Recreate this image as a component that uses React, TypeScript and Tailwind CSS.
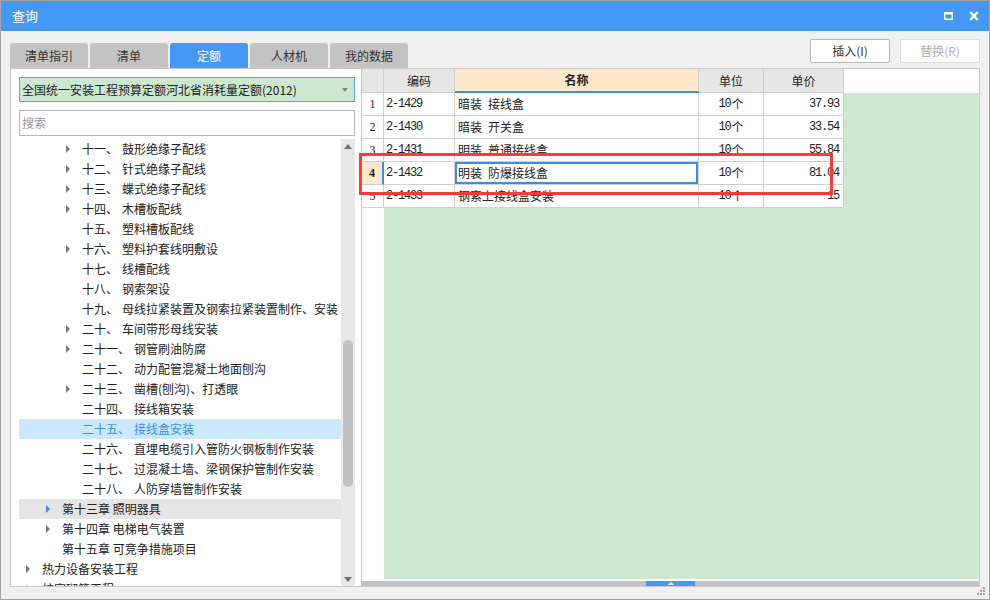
import React from "react";

type TreeNode = {
  level: number;
  arrow?: boolean;
  prefix?: string;
  label: string;
  selected?: boolean;
  hover?: boolean;
};

const TREE: TreeNode[] = [
  { level: 3, arrow: true, prefix: "十一、", label: "鼓形绝缘子配线" },
  { level: 3, arrow: true, prefix: "十二、", label: "针式绝缘子配线" },
  { level: 3, arrow: true, prefix: "十三、", label: "蝶式绝缘子配线" },
  { level: 3, arrow: true, prefix: "十四、", label: "木槽板配线" },
  { level: 3, prefix: "十五、", label: "塑料槽板配线" },
  { level: 3, arrow: true, prefix: "十六、", label: "塑料护套线明敷设" },
  { level: 3, prefix: "十七、", label: "线槽配线" },
  { level: 3, prefix: "十八、", label: "钢索架设" },
  { level: 3, prefix: "十九、", label: "母线拉紧装置及钢索拉紧装置制作、安装" },
  { level: 3, arrow: true, prefix: "二十、", label: "车间带形母线安装" },
  { level: 3, arrow: true, prefix: "二十一、", label: "钢管刷油防腐" },
  { level: 3, prefix: "二十二、", label: "动力配管混凝土地面刨沟" },
  { level: 3, arrow: true, prefix: "二十三、", label: "凿槽(刨沟)、打透眼" },
  { level: 3, prefix: "二十四、", label: "接线箱安装" },
  { level: 3, prefix: "二十五、", label: "接线盒安装", selected: true },
  { level: 3, prefix: "二十六、", label: "直埋电缆引入管防火钢板制作安装" },
  { level: 3, prefix: "二十七、", label: "过混凝土墙、梁钢保护管制作安装" },
  { level: 3, prefix: "二十八、", label: "人防穿墙管制作安装" },
  { level: 2, arrow: true, label: "第十三章 照明器具", hover: true },
  { level: 2, arrow: true, label: "第十四章 电梯电气装置" },
  { level: 2, label: "第十五章 可竞争措施项目" },
  { level: 1, arrow: true, label: "热力设备安装工程" },
  { level: 1, arrow: true, label: "炉窑砌筑工程" },
];

const ROWS = [
  ["1", "2-1429", "暗装 接线盒", "37.93"],
  ["2", "2-1430", "暗装 开关盒", "33.54"],
  ["3", "2-1431", "明装 普通接线盒", "55.84"],
  ["4", "2-1432", "明装 防爆接线盒", "81.04"],
  ["5", "2-1433", "钢索上接线盒安装", "15"],
];

const TABS = ["清单指引", "清单", "定额", "人材机", "我的数据"];

const MONO = "font-['Liberation_Mono','Noto_Sans_CJK_SC',monospace] tracking-[-1.2px]";

function TreeRow({ node }: { node: TreeNode }) {
  const indent = node.level === 3 ? "pl-[40px]" : node.level === 2 ? "pl-[20px]" : "pl-0";
  const bg = node.selected ? "bg-[#cce8ff] text-[#3a8ee6]" : node.hover ? "bg-[#e5e5e5]" : "";
  const arrowColor = node.hover ? "border-l-[#3a8ee6]" : "border-l-[#777]";
  return (
    <div className={`flex h-[20px] shrink-0 items-center whitespace-nowrap ${indent} ${bg}`}>
      <span className="flex w-[23px] shrink-0 items-center pl-[7px]">
        {node.arrow ? (
          <span className={`h-0 w-0 border-y-[4px] border-l-[4px] border-y-transparent ${arrowColor}`} />
        ) : null}
      </span>
      {node.prefix ? <span>{node.prefix}</span> : null}
      <span className={node.prefix ? "ml-1" : ""}>{node.label}</span>
    </div>
  );
}

export default function App() {
  return (
    <div className="relative flex h-[600px] w-[990px] flex-col overflow-hidden border border-[#a4a4a4] bg-[#f0f0f0] font-['Noto_Sans_CJK_SC','Noto_Sans',sans-serif] text-[12px] text-[#222]">
      {/* title bar */}
      <div className="flex h-[30px] shrink-0 items-center justify-between bg-[#4598f6] pl-[11px] pr-[10px] text-white">
        <span className="text-[13px]">查询</span>
        <div className="flex items-center gap-[16px]">
          <svg width="9" height="8" viewBox="0 0 9 8">
            <rect x="0.75" y="1.25" width="7.5" height="6" fill="none" stroke="#fff" strokeWidth="1.5" />
            <rect x="0" y="0" width="9" height="2.5" fill="#fff" />
          </svg>
          <svg width="10" height="10" viewBox="0 0 10 10">
            <path d="M1.2 1.2 L8.8 8.8 M8.8 1.2 L1.2 8.8" stroke="#fff" strokeWidth="2.4" />
          </svg>
        </div>
      </div>

      {/* tabs + buttons */}
      <div className="flex h-[37px] shrink-0 items-end justify-between px-[9px]">
        <div className="flex gap-[2px]">
          {TABS.map((t) => (
            <div
              key={t}
              className={`flex h-[25px] w-[78px] items-center justify-center rounded-t-[3px] ${
                t === "定额" ? "bg-[#4598f6] text-white" : "bg-[#c3c3c3] text-[#333]"
              }`}
            >
              {t}
            </div>
          ))}
        </div>
        <div className="mb-[5px] flex gap-[10px]">
          <button className="h-[24px] w-[80px] rounded-[2px] border border-[#b8b8b8] bg-white text-[#333]">插入(I)</button>
          <button className="h-[24px] w-[80px] rounded-[2px] border border-[#dcdcdc] bg-white text-[#b0b0b0]">替换(R)</button>
        </div>
      </div>

      {/* main */}
      <div className="mx-[9px] flex h-[519px] shrink-0 border border-[#c9c9c9] bg-white">
        {/* left panel */}
        <div className="flex w-[350px] shrink-0 flex-col pl-[8px] pr-[6px] pt-[8px]">
          <div className="flex h-[25px] shrink-0 items-center justify-between border border-[#5aa3f0] bg-[#cde8d1] pl-[2px] pr-[6px]">
            <span>全国统一安装工程预算定额河北省消耗量定额(2012)</span>
            <span className="h-0 w-0 border-x-[3.5px] border-t-[4px] border-x-transparent border-t-[#888]" />
          </div>
          <div className="mt-[8px] flex h-[26px] shrink-0 items-center border border-[#b4b4b4] pl-[2px] text-[#999]">搜索</div>
          <div className="mt-[3px] flex min-h-0 flex-1">
            <div className="flex min-w-0 flex-1 flex-col overflow-hidden">
              {TREE.map((n) => (
                <TreeRow key={n.label} node={n} />
              ))}
            </div>
            <div className="flex w-[14px] shrink-0 flex-col items-center bg-[#e8e8e8]">
              <div className="flex h-[14px] items-center">
                <span className="h-0 w-0 border-x-[4.5px] border-b-[5px] border-x-transparent border-b-[#707070]" />
              </div>
              <div className="mt-[187px] h-[147px] w-[10px] rounded-full bg-[#c1c1c1]" />
              <div className="flex-1" />
              <div className="flex h-[14px] items-center">
                <span className="h-0 w-0 border-x-[4.5px] border-t-[5px] border-x-transparent border-t-[#707070]" />
              </div>
            </div>
          </div>
        </div>

        <div className="w-px shrink-0 bg-[#c9c9c9]" />

        {/* right panel */}
        <div className="flex min-w-0 flex-1 flex-col">
          <div className="flex min-h-0 flex-1 flex-col">
            {/* header */}
            <div className="flex h-[24px] shrink-0">
              <div className="w-[22px] border-b border-r border-[#d0d0d0] bg-[#e6e6e6]" />
              <div className="flex w-[71px] items-center justify-center border-b border-r border-[#d0d0d0] bg-[#e6e6e6]">编码</div>
              <div className="flex w-[244px] items-center justify-center border-b-2 border-r border-b-[#3a8ee6] border-r-[#d0d0d0] bg-[#fde8cc] font-bold">名称</div>
              <div className="flex w-[65px] items-center justify-center border-b border-r border-[#d0d0d0] bg-[#e6e6e6]">单位</div>
              <div className="flex w-[80px] items-center justify-center border-b border-r border-[#d0d0d0] bg-[#e6e6e6]">单价</div>
              <div className="flex-1 bg-white" />
            </div>
            {/* body */}
            <div className="flex min-h-0 flex-1">
              <div className="flex w-[482px] shrink-0 flex-col">
                {ROWS.map(([n, code, name, price]) => {
                  const active = n === "4";
                  const parts = name.split(" ");
                  return (
                    <div key={n} className="flex h-[23px] shrink-0">
                      <div
                        className={`flex w-[22px] items-center justify-center border-b border-[#d0d0d0] font-['Liberation_Serif',serif] ${
                          active ? "border-r-2 border-r-[#3a8ee6] bg-[#fde8cc] font-bold" : "border-r"
                        }`}
                      >
                        {n}
                      </div>
                      <div className={`flex w-[71px] items-center border-b border-r border-[#d0d0d0] pl-[2px] ${MONO}`}>{code}</div>
                      <div
                        className={`flex w-[244px] items-center border-b border-r border-[#d0d0d0] pl-[3px] ${
                          active ? "shadow-[inset_0_0_0_2px_#3a8ee6]" : ""
                        }`}
                      >
                        <span>{parts[0]}</span>
                        {parts[1] ? <span className="ml-[6px]">{parts[1]}</span> : null}
                      </div>
                      <div className="flex w-[65px] items-center justify-center border-b border-r border-[#d0d0d0]">
                        <span className={MONO}>10</span>
                        <span className="ml-[1px]">个</span>
                      </div>
                      <div className={`flex w-[80px] items-center justify-end border-b border-r border-[#d0d0d0] pr-[4px] ${MONO}`}>{price}</div>
                    </div>
                  );
                })}
                <div className="flex flex-1">
                  <div className="w-[22px] bg-white" />
                  <div className="flex-1 bg-[#cde8d1]" />
                </div>
              </div>
              <div className="flex-1 bg-[#cde8d1]" />
            </div>
          </div>
          <div className="mt-[2px] flex h-[5px] shrink-0 justify-center bg-[#c1c1c1]">
            <div className="flex w-[49px] items-center justify-center bg-[#4598f6]">
              <span className="h-0 w-0 border-x-[3px] border-b-[3px] border-x-transparent border-b-white" />
            </div>
          </div>
        </div>
      </div>

      {/* bottom strip with grip */}
      <div className="flex flex-1 items-start justify-end pr-[3px]">
        <svg width="9" height="8" viewBox="0 0 9 8">
          <rect x="6" y="0" width="2" height="2" fill="#a0a0a0" />
          <rect x="3" y="3" width="2" height="2" fill="#a0a0a0" />
          <rect x="6" y="3" width="2" height="2" fill="#a0a0a0" />
          <rect x="0" y="6" width="2" height="2" fill="#a0a0a0" />
          <rect x="3" y="6" width="2" height="2" fill="#a0a0a0" />
          <rect x="6" y="6" width="2" height="2" fill="#a0a0a0" />
        </svg>
      </div>

      {/* red annotation */}
      <div className="pointer-events-none absolute left-[358px] top-[152px] h-[42px] w-[474px] border-[3px] border-[#ff3838]" />
    </div>
  );
}
